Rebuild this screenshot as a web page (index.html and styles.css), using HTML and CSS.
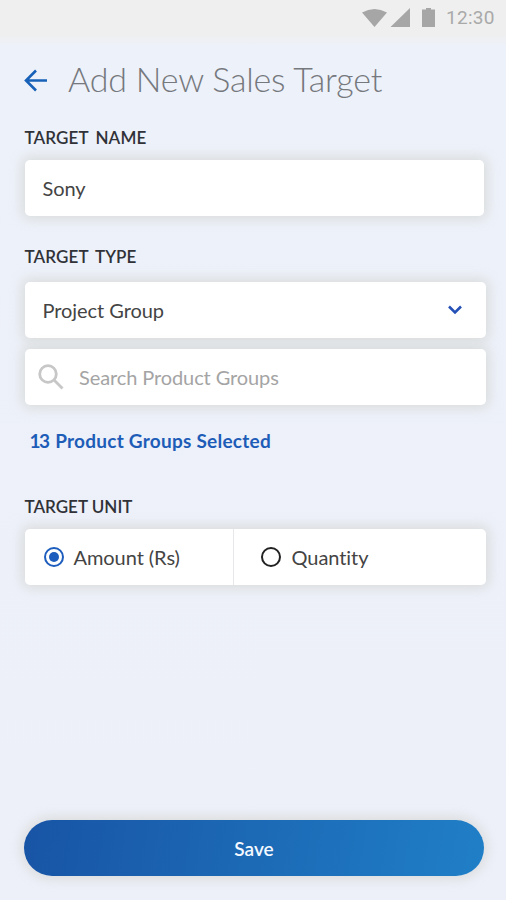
FILE: index.html
```html
<!DOCTYPE html>
<html lang="en">
<head>
<meta charset="utf-8">
<title>Add New Sales Target</title>
<link rel="stylesheet" href="styles.css">
</head>
<body>
<div class="status">
  <svg class="status-icons" width="76" height="24" viewBox="0 0 76 24"><path d="M0 5.5Q12.500-1.500 25 5.500L12.500 20ZM28.500 20L48 1V20ZM60 2.500h4V1h5v1.500h4V20H60Z"/></svg>
  <span class="clock">12:30</span>
</div>
<header class="header">
  <svg class="back" width="24" height="24" viewBox="0 0 24 24"><path d="M23 12.500H2M12 2.500L2 12.500L12 22.500"/></svg>
  <h1 class="title">Add New Sales Target</h1>
</header>
<main class="form">
  <h2 class="label spaced">TARGET NAME</h2>
  <div class="card name"><span class="text sony">Sony</span></div>
  <h2 class="label spaced type">TARGET TYPE</h2>
  <div class="card select"><span class="text project">Project Group</span>
    <svg class="chevron" width="16" height="12" viewBox="0 0 16 12"><path d="M2 2.500L8 8.500L14 2.500"/></svg>
  </div>
  <div class="card search">
    <svg class="glass" width="26" height="26" viewBox="0 0 26 26"><circle cx="10" cy="10" r="8.300"/><path d="M16 16L24.500 24.500"/></svg>
    <span class="text hint">Search Product Groups</span>
  </div>
  <p class="selected">13 Product Groups Selected</p>
  <h2 class="label unit-label">TARGET UNIT</h2>
  <div class="card units">
    <div class="option first">
      <svg class="radio on" width="22" height="22" viewBox="0 0 22 22"><circle cx="11" cy="11" r="9"/><circle class="dot" cx="11" cy="11" r="5"/></svg>
      <span class="text amount">Amount (Rs)</span>
    </div>
    <div class="option second">
      <svg class="radio" width="22" height="22" viewBox="0 0 22 22"><circle cx="11" cy="11" r="9"/></svg>
      <span class="text quantity">Quantity</span>
    </div>
  </div>
</main>
<div class="save">Save</div>
</body>
</html>
```
FILE: styles.css
```css
* { box-sizing: border-box; }
body {
  margin: 0;
  width: 506px;
  height: 900px;
  display: flex;
  flex-direction: column;
  overflow: hidden;
  background: linear-gradient(#efefef 0, #efefef 34px, #edf1f9 46px, #edf0f9 100%);
  font-family: Lato, "Liberation Sans", sans-serif;
  color: #444;
}
h1, h2, p { margin: 0; font-weight: 400; white-space: nowrap; }
svg { display: block; flex: none; fill: none; }
.status {
  height: 50px;
  padding: 7px 0 0 362px;
  display: flex;
  align-items: flex-start;
}
.status-icons { fill: #a6a6a6; }
.clock {
  margin-left: 8px;
  font: 400 19px/22px Roboto, sans-serif;
  color: #a9a9a9;
  letter-spacing: .3px;
}
.header { height: 60px; padding-left: 24px; display: flex; align-items: center; }
.back { stroke: #1861b9; stroke-width: 2.600; }
.title {
  margin-left: 20px;
  font-size: 34px;
  line-height: 58px;
  padding-bottom: 2px;
  font-weight: 300;
  letter-spacing: -.2px;
  color: #75787d;
}
.form { padding: 16px 20px 0 24.500px; }
.label {
  height: 24px;
  margin-bottom: 9.500px;
  font-size: 17px;
  line-height: 24px;
  font-weight: 600;
  color: #303238;
}
.spaced { word-spacing: 3px; letter-spacing: .1px; }
.card {
  height: 56.500px;
  display: flex;
  align-items: center;
  border-radius: 5px;
  background: #fff;
  box-shadow: 0 0 12px 3px rgba(190, 190, 175, .4);
}
.name { width: 459.800px; padding-left: 18px; }
.text { font-size: 20px; line-height: 28px; white-space: nowrap; letter-spacing: -.06px; }
.type { margin-top: 29px; margin-bottom: 12.500px; }
.select { padding: 0 23px 0 18px; justify-content: space-between; }
.chevron { stroke: #2551b7; stroke-width: 2.600; }
.search { margin-top: 10.500px; padding-left: 13.500px; }
.glass { stroke: #c7c7c7; stroke-width: 2.800; }
.hint { margin-left: 15px; color: #a4a4a4; letter-spacing: -.1px; }
.selected {
  height: 30px;
  margin: 20px 0 0 5px;
  font-size: 19px;
  line-height: 32px;
  font-weight: 700;
  letter-spacing: .25px;
  color: #1d5db8;
}
.selected::first-letter { letter-spacing: -1.500px; }
.unit-label { margin-top: 40px; }
.option { height: 100%; display: flex; align-items: center; }
.first { width: 209px; padding-left: 18px; border-right: 1px solid #e7e8ec; }
.second { padding-left: 26px; }
.radio { stroke: #222; stroke-width: 2; }
.on { stroke: #1d5dbd; }
.dot { fill: #1d5dbd; stroke: none; }
.amount { margin-left: 9px; }
.quantity { margin-left: 10px; }
.save {
  width: 460px;
  height: 56px;
  margin: auto 0 24px 24px;
  border-radius: 28px;
  background: linear-gradient(100deg, #1854a5, #207fc7);
  box-shadow: 0 0 12px 3px rgba(190, 190, 175, .4);
  color: #f5f9ff;
  font-size: 19px;
  line-height: 57px;
  font-weight: 600;
  text-align: center;
}
```
